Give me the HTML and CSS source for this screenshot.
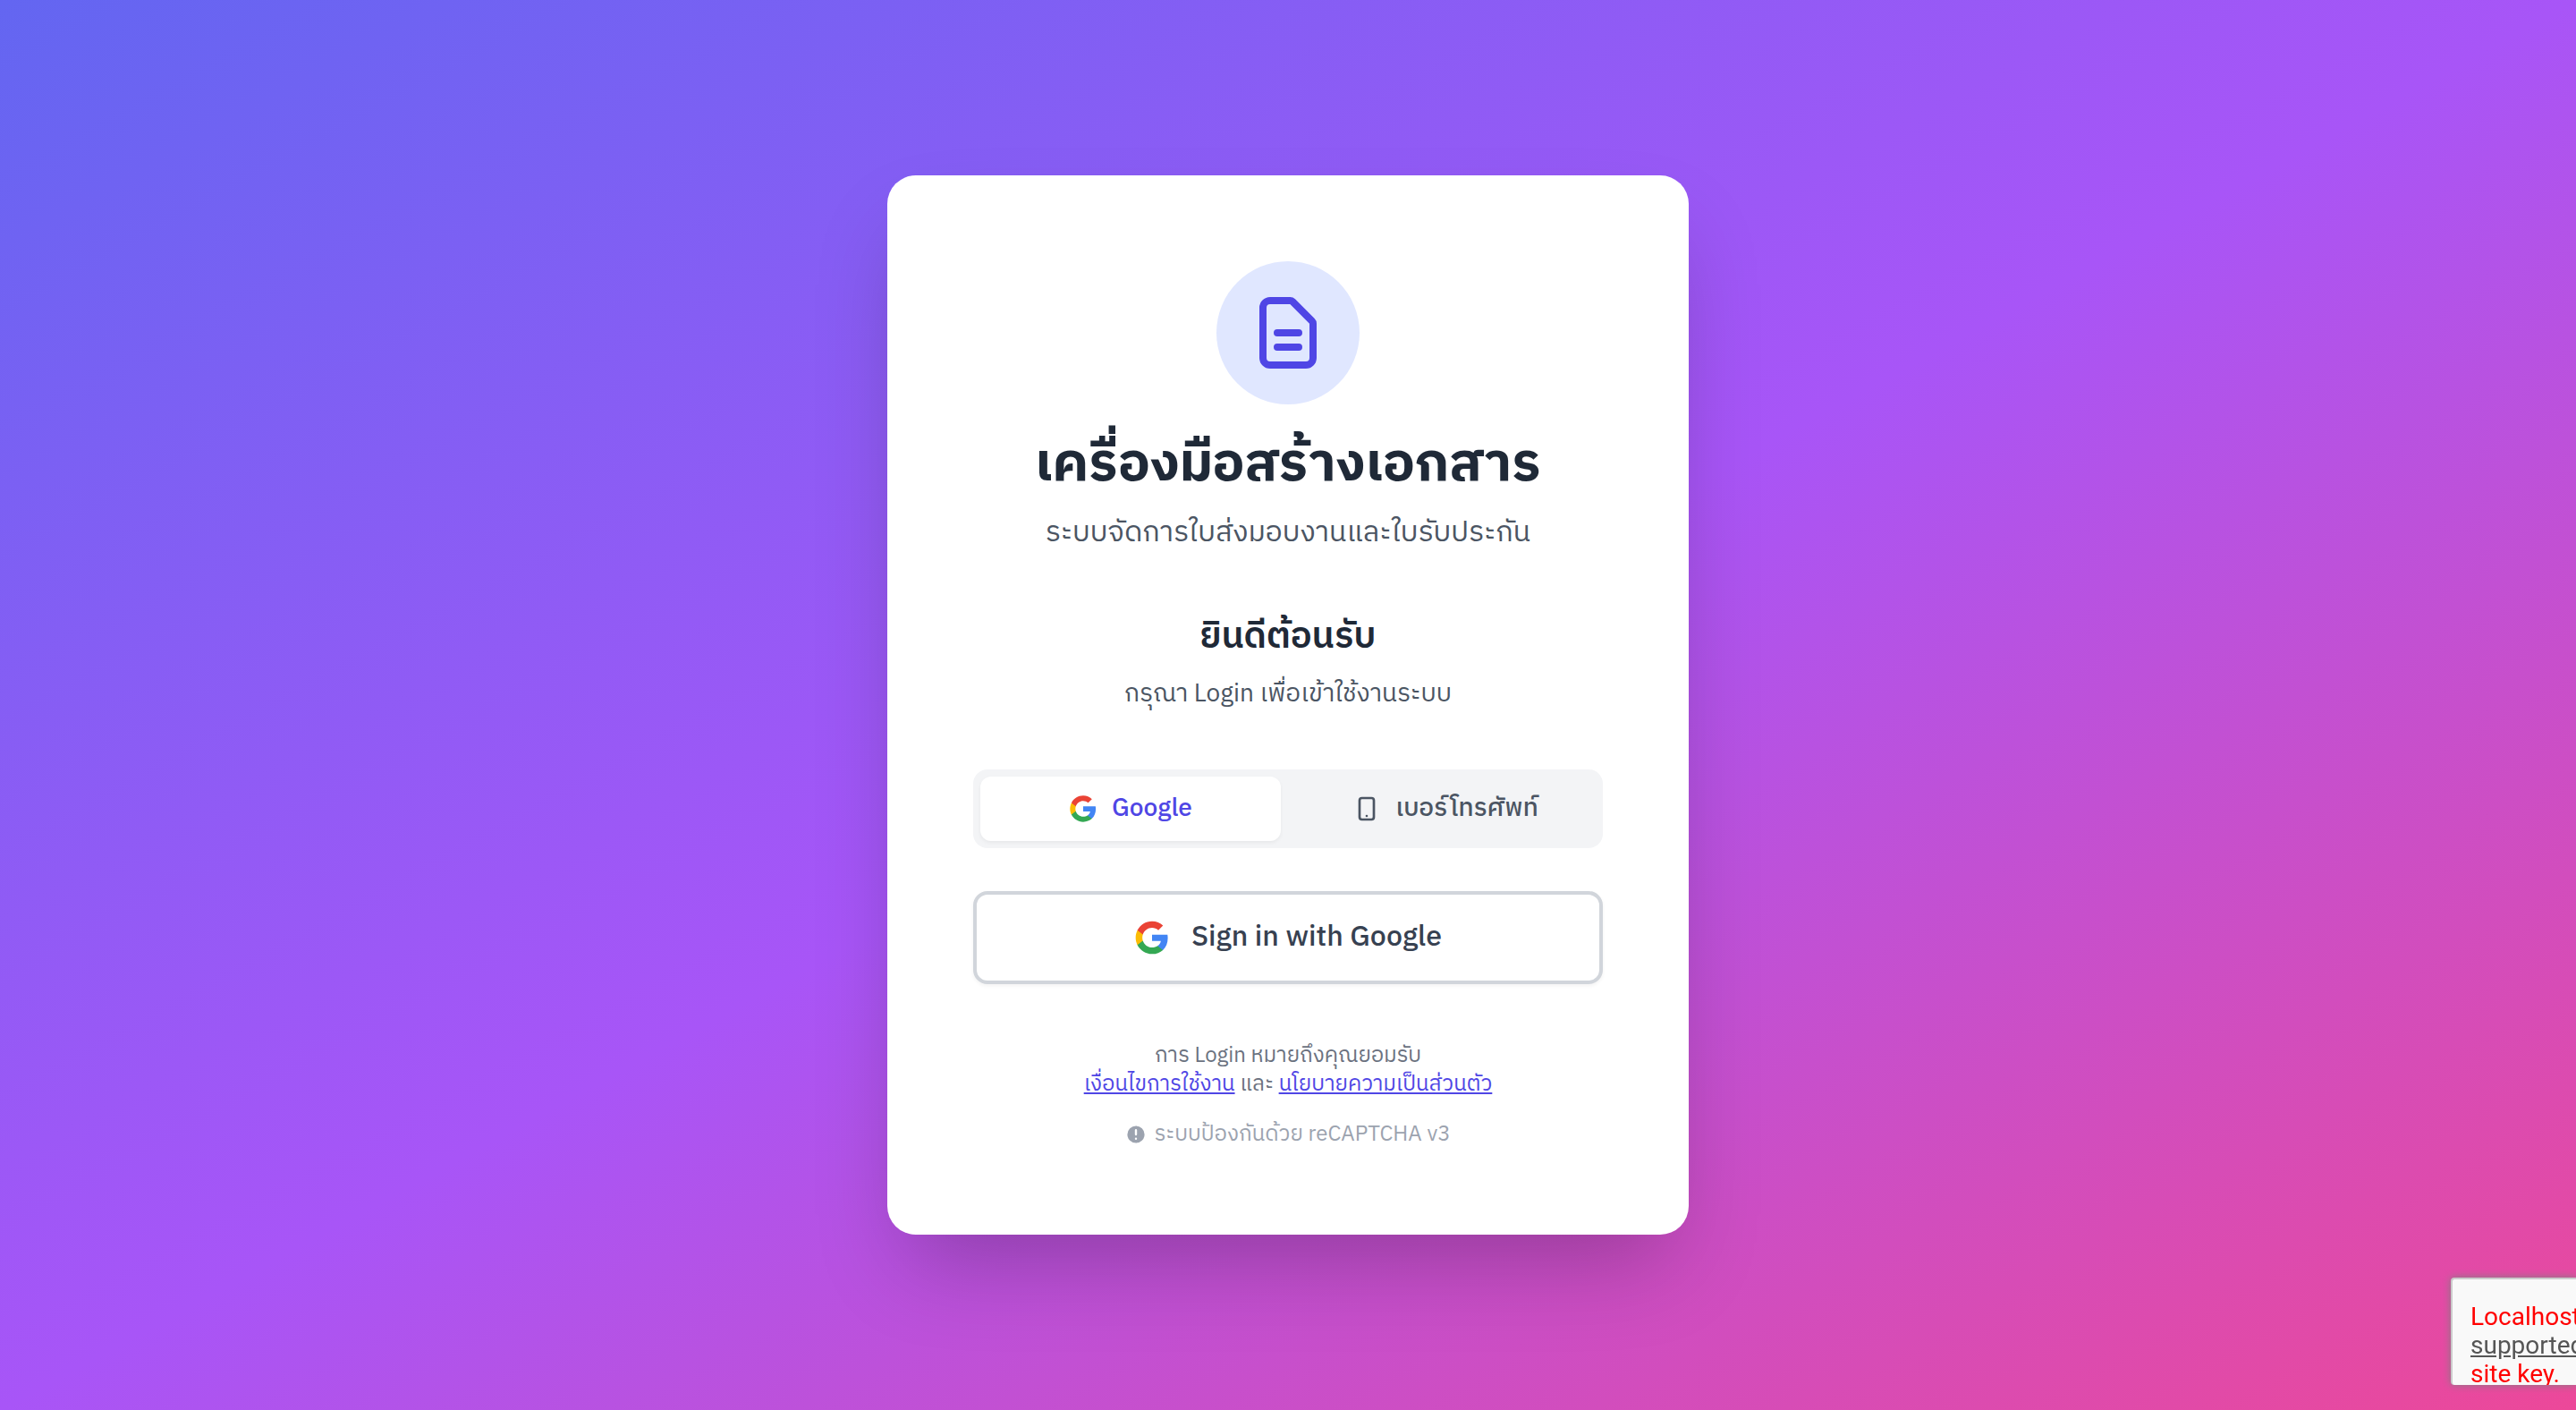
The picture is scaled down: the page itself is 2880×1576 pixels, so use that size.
FILE: index.html
```html
<!DOCTYPE html>
<html lang="th">
<head>
<meta charset="utf-8">
<meta name="viewport" content="width=device-width, initial-scale=1">
<title>เครื่องมือสร้างเอกสาร</title>
<link rel="stylesheet" href="styles.css">
</head>
<body>
<svg class="sprite" aria-hidden="true">
  <symbol id="google" viewBox="0 0 24 24">
    <path fill="#4285F4" d="M22.56 12.25c0-.78-.07-1.53-.2-2.25H12v4.26h5.92c-.26 1.37-1.04 2.53-2.21 3.31v2.77h3.57c2.08-1.92 3.28-4.74 3.28-8.09z"/>
    <path fill="#34A853" d="M12 23c2.97 0 5.46-.98 7.28-2.66l-3.57-2.77c-.98.66-2.23 1.06-3.71 1.06-2.86 0-5.29-1.93-6.16-4.53H2.18v2.84C3.99 20.53 7.7 23 12 23z"/>
    <path fill="#FBBC05" d="M5.84 14.09c-.22-.66-.35-1.36-.35-2.09s.13-1.43.35-2.09V7.07H2.18C1.43 8.55 1 10.22 1 12s.43 3.45 1.18 4.93l2.85-2.22.81-.62z"/>
    <path fill="#EA4335" d="M12 5.38c1.62 0 3.06.56 4.21 1.64l3.15-3.15C17.45 2.09 14.97 1 12 1 7.7 1 3.99 3.47 2.18 7.07l3.66 2.84c.87-2.6 3.3-4.53 6.16-4.53z"/>
  </symbol>
</svg>
<main class="page">
  <section class="card">
    <header class="brand">
      <div class="brand-badge">
        <svg class="brand-icon" viewBox="0 0 24 24" aria-hidden="true"><path d="M9 12h6m-6 4h6m2 5H7a2 2 0 01-2-2V5a2 2 0 012-2h5.586a1 1 0 01.707.293l5.414 5.414a1 1 0 01.293.707V19a2 2 0 01-2 2z"/></svg>
      </div>
      <h1 class="title">เครื่องมือสร้างเอกสาร</h1>
      <p class="subtitle">ระบบจัดการใบส่งมอบงานและใบรับประกัน</p>
    </header>
    <div class="welcome">
      <h2 class="welcome-title">ยินดีต้อนรับ</h2>
      <p class="welcome-text">กรุณา Login เพื่อเข้าใช้งานระบบ</p>
    </div>
    <div class="tabs">
      <button type="button" class="tab tab-active"><svg class="icon-sm" aria-hidden="true"><use href="#google"/></svg><span>Google</span></button>
      <button type="button" class="tab"><svg class="icon-sm icon-line" viewBox="0 0 24 24" aria-hidden="true"><path d="M12 18h.01M8 21h8a2 2 0 002-2V5a2 2 0 00-2-2H8a2 2 0 00-2 2v14a2 2 0 002 2z"/></svg><span>เบอร์โทรศัพท์</span></button>
    </div>
    <button type="button" class="signin"><svg class="icon-md" aria-hidden="true"><use href="#google"/></svg><span>Sign in with Google</span></button>
    <footer class="legal">
      <p>การ Login หมายถึงคุณยอมรับ<br><a href="#terms">เงื่อนไขการใช้งาน</a> และ <a href="#privacy">นโยบายความเป็นส่วนตัว</a></p>
      <p class="protected"><svg class="icon-xs" viewBox="0 0 20 20" aria-hidden="true"><path fill-rule="evenodd" d="M18 10a8 8 0 11-16 0 8 8 0 0116 0zm-7 4a1 1 0 11-2 0 1 1 0 012 0zm-1-9a1 1 0 00-1 1v4a1 1 0 102 0V6a1 1 0 00-1-1z" clip-rule="evenodd"/></svg><span>ระบบป้องกันด้วย reCAPTCHA v3</span></p>
    </footer>
  </section>
</main>
<aside class="captcha"><p>Localhost<br><a href="#domains">supported</a><br>site key.</p></aside>
</body>
</html>
```
FILE: styles.css
```css
*, *::before, *::after { box-sizing: border-box; }
body, h1, h2, p { margin: 0; }
body {
  font-family: "IBM Plex Sans Thai", Roboto, "Noto Sans Thai", "Noto Sans", sans-serif;
  color: #1f2937;
  overflow-x: hidden;
}
button { font: inherit; color: inherit; border: 0; background: none; cursor: pointer; }
svg { display: block; flex: none; }
.sprite { position: absolute; width: 0; height: 0; }
.page {
  min-height: 100vh;
  display: flex;
  align-items: center;
  justify-content: center;
  padding: 32px;
  background: linear-gradient(to bottom right, #6366f1, #a855f7, #ec4899);
}
.card {
  width: 100%;
  max-width: 896px;
  padding: 96px;
  border-radius: 32px;
  background: #fff;
  box-shadow: 0 50px 100px -24px rgba(0, 0, 0, .25);
  text-align: center;
}
.brand { margin-bottom: 64px; }
.brand-badge {
  width: 160px;
  height: 160px;
  margin: 0 auto 32px;
  display: flex;
  align-items: center;
  justify-content: center;
  border-radius: 50%;
  background: #e0e7ff;
}
.brand-icon {
  width: 96px;
  height: 96px;
  fill: none;
  stroke: #4f46e5;
  stroke-width: 2;
  stroke-linecap: round;
  stroke-linejoin: round;
}
.title { font-size: 60px; line-height: 72px; font-weight: 700; margin-bottom: 16px; white-space: nowrap; }
.subtitle { font-size: 32px; line-height: 48px; color: #4b5563; white-space: nowrap; }
.welcome { margin-bottom: 64px; }
.welcome-title { font-size: 40px; line-height: 56px; font-weight: 600; margin-bottom: 16px; }
.welcome-text { font-size: 28px; line-height: 40px; color: #4b5563; }
.tabs {
  display: grid;
  grid-template-columns: 1fr 1fr;
  gap: 16px;
  padding: 8px;
  margin-bottom: 48px;
  border-radius: 16px;
  background: #f3f4f6;
}
.tab {
  display: flex;
  align-items: center;
  justify-content: center;
  gap: 16px;
  padding: 16px;
  border-radius: 12px;
  font-size: 28px;
  line-height: 40px;
  font-weight: 500;
  color: #4b5563;
}
.tab-active { background: #fff; color: #4f46e5; box-shadow: 0 2px 4px rgba(0, 0, 0, .05); }
.icon-xs { width: 24px; height: 24px; fill: currentColor; }
.icon-sm { width: 32px; height: 32px; }
.icon-md { width: 40px; height: 40px; }
.icon-line { fill: none; stroke: currentColor; stroke-width: 2; stroke-linecap: round; stroke-linejoin: round; }
.signin {
  width: 100%;
  display: flex;
  align-items: center;
  justify-content: center;
  gap: 24px;
  padding: 24px;
  border: 4px solid #d1d5db;
  border-radius: 16px;
  background: #fff;
  box-shadow: 0 2px 4px rgba(0, 0, 0, .05);
  font-size: 32px;
  line-height: 48px;
  font-weight: 500;
  color: #374151;
}
.legal { margin-top: 64px; font-size: 24px; line-height: 32px; color: #6b7280; }
.legal a { color: #4f46e5; text-decoration: underline; }
.protected { margin-top: 24px; display: flex; align-items: center; justify-content: center; gap: 8px; color: #9ca3af; }
.captcha {
  position: fixed;
  right: 0;
  bottom: 28px;
  width: 140px;
  height: 120px;
  padding: 26px 0 0 20px;
  overflow: hidden;
  border: 2px solid #ccc;
  border-width: 2px 0 0 2px;
  border-radius: 4px 0 0 4px;
  background: #f9f9f9;
  box-shadow: 0 0 10px gray;
  font-family: Roboto, sans-serif;
  font-size: 28px;
  line-height: 32px;
  color: red;
  white-space: nowrap;
}
.captcha a { color: #555; }
```
